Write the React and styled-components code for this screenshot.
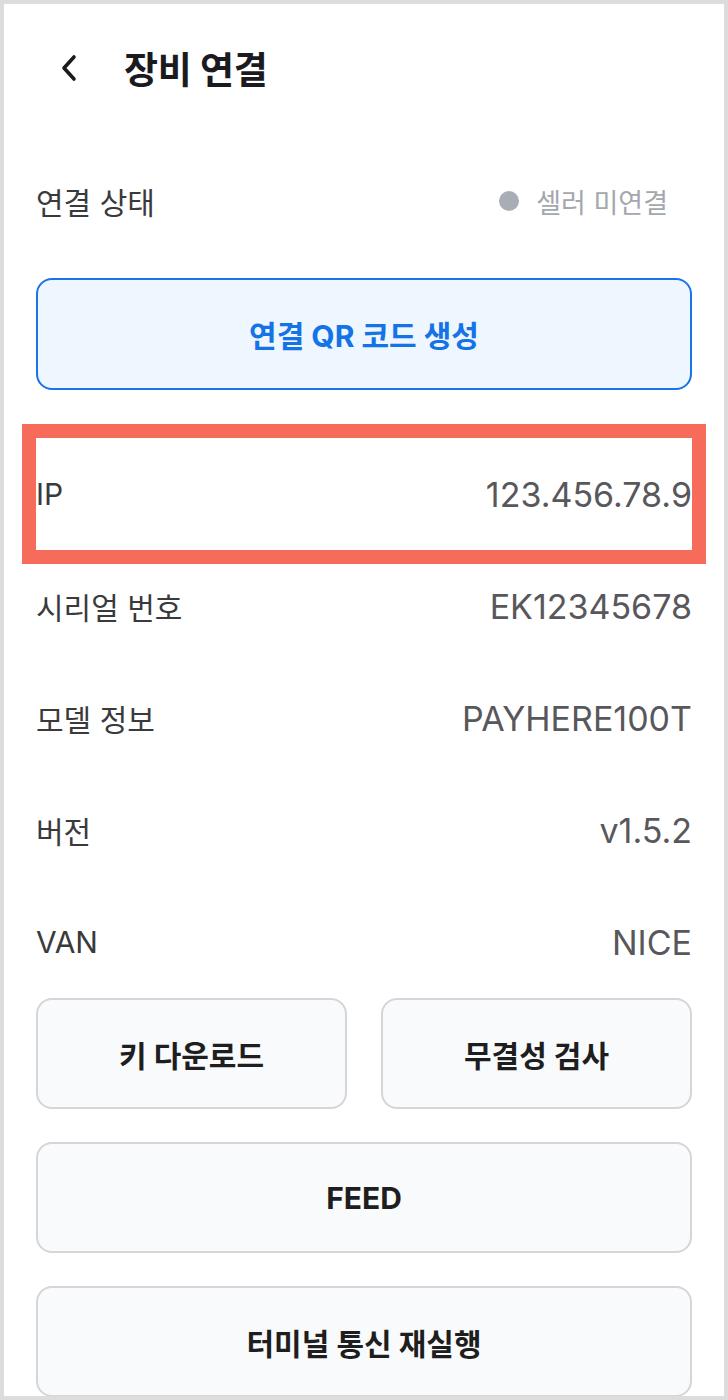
import React from "react";
import styled, { createGlobalStyle } from "styled-components";

const GlobalStyle = createGlobalStyle`
  html, body {
    margin: 0;
    padding: 0;
    background: #dcdcdc;
  }
  body {
    font-family: "Inter", "Noto Sans CJK KR", sans-serif;
  }
  * { box-sizing: border-box; }
`;

const Frame = styled.div`
  margin: 4px;
  height: 1392px;
  overflow: hidden;
  background: #ffffff;
  padding: 0 32px;
`;

const Header = styled.header`
  height: 128px;
  display: flex;
  align-items: center;
`;

const BackButton = styled.button`
  border: none;
  background: none;
  padding: 0;
  margin-left: 24px;
  display: flex;
  align-items: center;
  color: #1b1b1f;
  cursor: pointer;
`;

const Title = styled.h1`
  margin: 0 0 0 46px;
  font-size: 37px;
  font-weight: 700;
  color: #1b1b1f;
  letter-spacing: -0.3px;
`;

const Row = styled.div`
  position: relative;
  height: 112px;
  display: flex;
  align-items: center;
  justify-content: space-between;
  margin-top: ${(p) => p.$mt || 0}px;

  ${(p) =>
    p.$highlight &&
    `
    &::after {
      content: "";
      position: absolute;
      inset: -14px;
      border: 14px solid #f76b5a;
      pointer-events: none;
    }
  `}
`;

const Label = styled.span`
  font-size: 30px;
  color: #3a3a3c;
`;

const Value = styled.span`
  font-size: 34px;
  color: #58585c;
`;

const Status = styled.span`
  display: flex;
  align-items: center;
  gap: 17px;
  margin-right: 24px;
  font-size: 27px;
  color: #a3a7ae;
`;

const Dot = styled.span`
  width: 20px;
  height: 20px;
  border-radius: 50%;
  background: #a9adb6;
`;

const QRButton = styled.button`
  width: 100%;
  height: 112px;
  margin-top: 21px;
  border: 2px solid #1a74e8;
  border-radius: 16px;
  background: #eef6ff;
  color: #1573e6;
  font-family: inherit;
  font-size: 30px;
  font-weight: 700;
  cursor: pointer;
`;

const ButtonGrid = styled.div`
  display: grid;
  grid-template-columns: ${(p) => (p.$cols === 2 ? "1fr 1fr" : "1fr")};
  gap: 34px;
  margin-bottom: 33px;
`;

const ActionButton = styled.button`
  height: 111px;
  border: 2px solid #d5d5da;
  border-radius: 16px;
  background: #f9fafc;
  color: #1e1e21;
  font-family: inherit;
  font-size: 30px;
  font-weight: 700;
  cursor: pointer;
`;

const ChevronLeft = () => (
  <svg width="18" height="28" viewBox="0 0 18 28" fill="none">
    <polyline
      points="14,3 4,14 14,25"
      stroke="currentColor"
      strokeWidth="3.6"
      strokeLinecap="round"
      strokeLinejoin="round"
    />
  </svg>
);

const rows = [
  { label: "IP", value: "123.456.78.9", highlight: true, mt: 48 },
  { label: "시리얼 번호", value: "EK12345678" },
  { label: "모델 정보", value: "PAYHERE100T" },
  { label: "버전", value: "v1.5.2" },
  { label: "VAN", value: "NICE" },
];

export default function App() {
  return (
    <>
      <GlobalStyle />
      <Frame>
        <Header>
          <BackButton aria-label="뒤로">
            <ChevronLeft />
          </BackButton>
          <Title>장비 연결</Title>
        </Header>

        <Row $mt={13}>
          <Label>연결 상태</Label>
          <Status>
            <Dot />
            셀러 미연결
          </Status>
        </Row>

        <QRButton>연결 QR 코드 생성</QRButton>

        {rows.map((r) => (
          <Row key={r.label} $mt={r.mt} $highlight={r.highlight}>
            <Label>{r.label}</Label>
            <Value>{r.value}</Value>
          </Row>
        ))}

        <ButtonGrid $cols={2}>
          <ActionButton>키 다운로드</ActionButton>
          <ActionButton>무결성 검사</ActionButton>
        </ButtonGrid>
        <ButtonGrid>
          <ActionButton>FEED</ActionButton>
        </ButtonGrid>
        <ButtonGrid>
          <ActionButton>터미널 통신 재실행</ActionButton>
        </ButtonGrid>
      </Frame>
    </>
  );
}
